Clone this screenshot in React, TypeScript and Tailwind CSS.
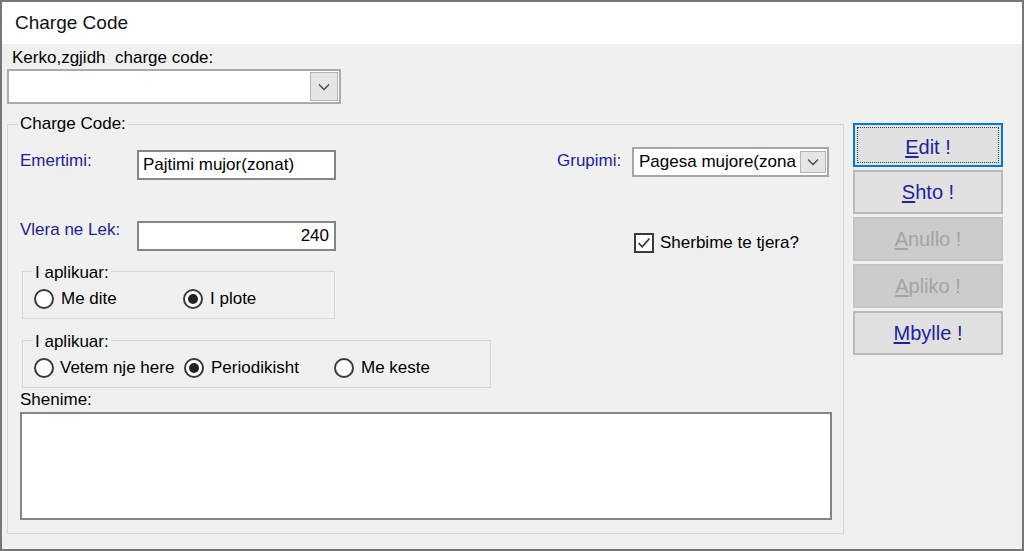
import React from 'react';

const Radio = ({ checked }: { checked?: boolean }) => (
  <span className="w-5 h-5 shrink-0 rounded-full border-2 border-[#3a3a3a] bg-white flex items-center justify-center">
    {checked && <span className="w-[10px] h-[10px] rounded-full bg-[#222]" />}
  </span>
);

const RadioItem = ({ label, checked, w }: { label: string; checked?: boolean; w: string }) => (
  <div className={`flex items-center gap-[7px] ${w}`}>
    <Radio checked={checked} />
    <span className="leading-5 whitespace-nowrap">{label}</span>
  </div>
);

const Chevron = () => (
  <svg width="12" height="8" viewBox="0 0 12 8" fill="none">
    <path d="M1 1.5 L6 6.5 L11 1.5" stroke="#444" strokeWidth="1.3" />
  </svg>
);

const Btn = ({ first, rest, disabled, focused }: { first: string; rest: string; disabled?: boolean; focused?: boolean }) => {
  const text = (
    <span className={`text-[20px] leading-6 ${disabled ? 'text-[#a3a3a3]' : 'text-[#22229e]'}`}>
      <span className="underline underline-offset-2">{first}</span>
      {rest}
    </span>
  );
  if (focused) {
    return (
      <div className="h-[44px] border-2 border-[#0078d7] bg-[#e1e1e1] p-[2px]">
        <div className="h-full border border-dotted border-[#4a4010] flex items-center justify-center pt-[3px]">{text}</div>
      </div>
    );
  }
  return (
    <div
      className={`h-[44px] border-2 flex items-center justify-center ${
        disabled ? 'bg-[#cccccc] border-[#c4c4c4]' : 'bg-[#e1e1e1] border-[#b9b9b9]'
      }`}
    >
      {text}
    </div>
  );
};

export default function App() {
  return (
    <div className="w-[1024px] h-[551px] border-2 border-[#777] bg-[#f0f0f0] flex flex-col text-[17px] text-black font-['Liberation_Sans',Arial,sans-serif] overflow-hidden">
      {/* Title bar */}
      <div className="h-[42px] shrink-0 bg-white flex items-center pl-[13px]">
        <span className="text-[19px] text-[#111]">Charge Code</span>
      </div>

      {/* Body */}
      <div className="flex-1 pl-[5px]">
        <div className="mt-[4px] pl-[5px] leading-5 whitespace-pre">Kerko,zgjidh  charge code:</div>
        <div className="mt-[1px] w-[334px] h-[35px] bg-white border-2 border-[#ababab] flex justify-end items-center pr-[1px]">
          <div className="w-[28px] h-[29px] bg-[#e5e5e5] border border-[#b3b3b3] flex items-center justify-center">
            <Chevron />
          </div>
        </div>

        <div className="flex items-start mt-[10px]">
          <fieldset className="w-[837px] border border-[#d6d6d6] pl-[12px] pb-[13px]">
            <legend className="-ml-[2px] px-[2px] leading-5">Charge Code:</legend>

            {/* Row 1 */}
            <div className="flex items-start mt-[16px]">
              <span className="w-[117px] pt-[1px] leading-5 text-[#1e1e96]">Emertimi:</span>
              <div className="w-[199px] h-[30px] bg-white border-2 border-[#858585] flex items-center px-[4px]">
                Pajtimi mujor(zonat)
              </div>
              <span className="ml-[221px] w-[75px] pt-[1px] leading-5 text-[#1e1e96]">Grupimi:</span>
              <div className="-mt-[3px] w-[197px] h-[30px] bg-white border-2 border-[#a6a6a6] flex items-center pl-[5px] pr-[1px]">
                <span className="flex-1 whitespace-nowrap">Pagesa mujore(zona</span>
                <div className="w-[26px] h-[22px] bg-[#e5e5e5] border border-[#b3b3b3] flex items-center justify-center shrink-0">
                  <Chevron />
                </div>
              </div>
            </div>

            {/* Row 2 */}
            <div className="flex items-start mt-[41px]">
              <span className="w-[117px] -mt-[1px] leading-5 text-[#1e1e96]">Vlera ne Lek:</span>
              <div className="w-[199px] h-[30px] bg-white border-2 border-[#858585] flex items-center justify-end px-[5px]">
                240
              </div>
              <div className="ml-[298px] mt-[12px] flex items-center gap-[6px]">
                <span className="w-5 h-5 border-2 border-[#3a3a3a] bg-white flex items-center justify-center">
                  <svg width="14" height="12" viewBox="0 0 14 12" fill="none">
                    <path d="M1.5 6 L5.2 9.8 L12.5 1.5" stroke="#333" strokeWidth="1.6" />
                  </svg>
                </span>
                <span className="leading-5">Sherbime te tjera?</span>
              </div>
            </div>

            {/* Group 1 */}
            <fieldset className="mt-[8px] ml-[2px] w-[313px] border border-[#d6d6d6] pt-[8px] pb-[9px] pl-[11px]">
              <legend className="-ml-[1px] px-[2px] pt-[4px] leading-4">I aplikuar:</legend>
              <div className="flex">
                <RadioItem label="Me dite" w="w-[149px]" />
                <RadioItem label="I plote" checked w="w-[120px]" />
              </div>
            </fieldset>

            {/* Group 2 */}
            <fieldset className="mt-[11px] ml-[2px] w-[469px] border border-[#d6d6d6] pt-[8px] pb-[9px] pl-[11px]">
              <legend className="-ml-[1px] px-[2px] pt-[4px] leading-4">I aplikuar:</legend>
              <div className="flex">
                <div className="flex items-center gap-[6px] w-[150px]">
                  <Radio />
                  <span className="leading-5 whitespace-nowrap">Vetem nje here</span>
                </div>
                <div className="flex items-center gap-[7px] w-[150px]">
                  <Radio checked />
                  <span className="leading-5">Periodikisht</span>
                </div>
                <div className="flex items-center gap-[7px]">
                  <Radio />
                  <span className="leading-5">Me keste</span>
                </div>
              </div>
            </fieldset>

            <div className="mt-[2px] leading-5">Shenime:</div>
            <div className="mt-[2px] w-[812px] h-[108px] bg-white border-2 border-[#858585]" />
          </fieldset>

          {/* Buttons */}
          <div className="ml-[9px] mt-[9px] w-[150px] flex flex-col gap-[3px]">
            <Btn first="E" rest="dit !" focused />
            <Btn first="S" rest="hto !" />
            <Btn first="A" rest="nullo !" disabled />
            <Btn first="A" rest="pliko !" disabled />
            <Btn first="M" rest="bylle !" />
          </div>
        </div>
      </div>
    </div>
  );
}
